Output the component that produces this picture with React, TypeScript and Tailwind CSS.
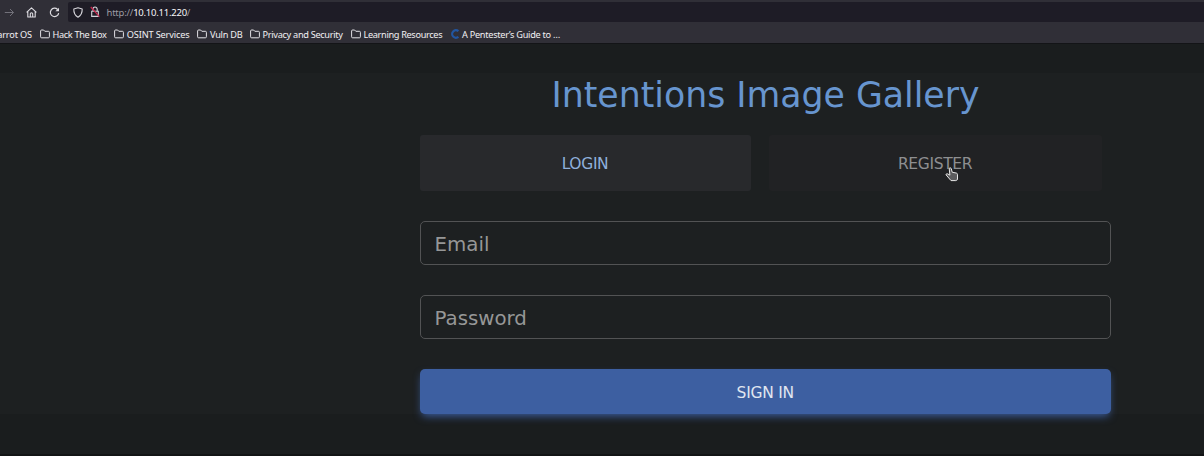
import React from "react";

const bookmarks = [
  { label: "Hack The Box", width: "w-[74.3px]", tracking: "tracking-[-0.35px]" },
  { label: "OSINT Services", width: "w-[83.2px]", tracking: "tracking-[-0.16px]" },
  { label: "Vuln DB", width: "w-[52.5px]", tracking: "tracking-[-0.25px]" },
  { label: "Privacy and Security", width: "w-[101px]", tracking: "tracking-[-0.31px]" },
  { label: "Learning Resources", width: "w-[99px]", tracking: "tracking-[-0.34px]" },
];

function Folder() {
  return (
    <svg className="mr-[2.5px] shrink-0" width="10" height="10" viewBox="0 0 10 10" fill="none" stroke="#e2e1e6" strokeWidth="1">
      <path d="M.6 2Q.6 1 1.6 1H3.6L4.8 2.3H8.4Q9.4 2.3 9.4 3.3V7.8Q9.4 8.8 8.4 8.8H1.6Q.6 8.8 .6 7.8Z" />
    </svg>
  );
}

function Toolbar() {
  return (
    <div className="flex h-[25px] shrink-0 items-start bg-[#302f37]">
      <svg className="mt-[7px] ml-[4px] shrink-0" width="11" height="11" viewBox="0 0 11 11" fill="none" stroke="#72717a" strokeWidth="1">
        <path d="M.8 5.5H9.5M6 2L9.5 5.5L6 9" />
      </svg>
      <svg className="mt-[7px] ml-[11px] shrink-0" width="11" height="11" viewBox="0 0 11 11" fill="none" stroke="#dddce1" strokeWidth="1.1" strokeLinejoin="round">
        <path d="M.6 5.4L5.5.8L10.4 5.4M1.8 4.6V10H9.2V4.6M4.3 10V6.7Q4.3 5.7 5.5 5.7T6.7 6.7V10" />
      </svg>
      <svg className="mt-[7px] ml-[12px] shrink-0" width="11" height="11" viewBox="0 0 11 11" fill="none" stroke="#dddce1" strokeWidth="1.2">
        <path d="M8.6 2.5A4.2 4.2 0 1 0 9.7 6.1" />
        <path d="M10 .8V4.3H6.4Z" fill="#dddce1" stroke="none" />
      </svg>
      <div className="mt-[2px] ml-[8px] flex h-[20px] flex-1 items-center rounded-l-[2px] bg-[#1e1c26]">
        <svg className="ml-[5px] shrink-0" width="10" height="11" viewBox="0 0 10 11" fill="none" stroke="#d5d4da" strokeWidth="1.1" strokeLinejoin="round">
          <path d="M5 .7L9.2 2Q9.4 7.7 5 10.2Q.6 7.7 .8 2Z" />
        </svg>
        <svg className="ml-[7px] shrink-0" width="10" height="12" viewBox="0 0 10 12" fill="none" stroke="#d5d4da" strokeWidth="1.1">
          <path d="M3 5V3.2Q3 1 5 1T7.2 3.2V5M1.7 5.3H8.3V10.4H1.7Z" />
          <path d="M.8 1L9.4 10.6" stroke="#c92a50" strokeWidth="1.3" />
        </svg>
        <div className="ml-[6.5px] w-[84px] pt-px text-[9.5px] leading-[20px] tracking-[-0.22px] whitespace-nowrap text-[#9c9ba3]">
          http://<span className="tracking-[-0.24px] text-[#f6f5f9]">10.10.11.220</span>/
        </div>
      </div>
    </div>
  );
}

function BookmarksBar() {
  return (
    <div className="flex h-[19px] shrink-0 items-center overflow-hidden border-b border-[#131417] bg-[#302f37] text-[9.2px] leading-[17px] whitespace-nowrap text-[#f0eff3]">
      <div className="flex w-[40px] shrink-0 justify-end pr-[8px] tracking-[-0.15px]">Parrot OS</div>
      {bookmarks.map((b) => (
        <div key={b.label} className={"flex shrink-0 items-center " + b.width + " " + b.tracking}>
          <Folder />
          {b.label}
        </div>
      ))}
      <svg className="mr-[2px] shrink-0" width="10" height="10" viewBox="0 0 10 10" fill="none" stroke="#22559f" strokeWidth="2.2">
        <path d="M8.4 2.1A3.8 3.8 0 1 0 8.4 7.9" />
      </svg>
      <span className="tracking-[-0.29px]">A Pentester’s Guide to …</span>
    </div>
  );
}

function HandCursor() {
  return (
    <svg className="absolute top-[32px] left-[176px]" width="14" height="16" viewBox="0 0 14 16">
      <path d="M4.2 1.3Q5.3.3 6.2 1.4L7.2 5.2L11.5 6.1Q12.6 6.5 12.5 7.7V12.6L10.8 13.6H6L1 7.8Q1.2 6.4 2.5 6.8L4.9 8.2Z" fill="#5c5c5e" stroke="#e6e6e6" strokeWidth="1" strokeLinejoin="round" />
    </svg>
  );
}

export default function App() {
  return (
    <div className="flex h-[456px] w-[1204px] flex-col overflow-hidden bg-[#1d2021] font-['Noto_Sans',sans-serif]">
      <Toolbar />
      <BookmarksBar />
      <main className="flex flex-1 flex-col border-b-2 border-[#121415] bg-[linear-gradient(#1a1d1e_29px,#1d2021_29px,#1d2021_370px,#1a1d1e_370px)] pl-[419.5px] font-['DejaVu_Sans',sans-serif]">
        <h1 className="mt-[29px] h-[44px] w-[692px] text-center text-[34.7px] leading-[44px] whitespace-nowrap text-[#6795cf]">
          Intentions Image Gallery
        </h1>
        <div className="mt-[18px] flex h-[56px] gap-[18px] text-[15.5px] tracking-[-0.35px]">
          <div className="flex w-[331px] items-center justify-center rounded-[3px] bg-[#28292c] pt-[4px] text-[#8fb0dc]">LOGIN</div>
          <div className="relative flex w-[333px] items-center justify-center rounded-[3px] bg-[#212224] pt-[4px] text-[#8e8f91]">
            REGISTER
            <HandCursor />
          </div>
        </div>
        <div className="mt-[30px] flex h-[44px] w-[691.5px] items-center rounded-[5px] border border-[#525354] pt-[4px] pl-[14px] text-[19.8px] text-[#969797]">Email</div>
        <div className="mt-[30px] flex h-[44px] w-[691.5px] items-center rounded-[5px] border border-[#525354] pt-[4px] pl-[14px] text-[19.8px] text-[#969797]">Password</div>
        <button className="mt-[30px] h-[45px] w-[691.5px] rounded-[5px] bg-[#3d5fa1] pt-[5px] text-[15.5px] tracking-[-0.25px] text-[#e0e6f0] shadow-[0_4px_9px_-2px_#3d5fa1]">
          SIGN IN
        </button>
      </main>
    </div>
  );
}
